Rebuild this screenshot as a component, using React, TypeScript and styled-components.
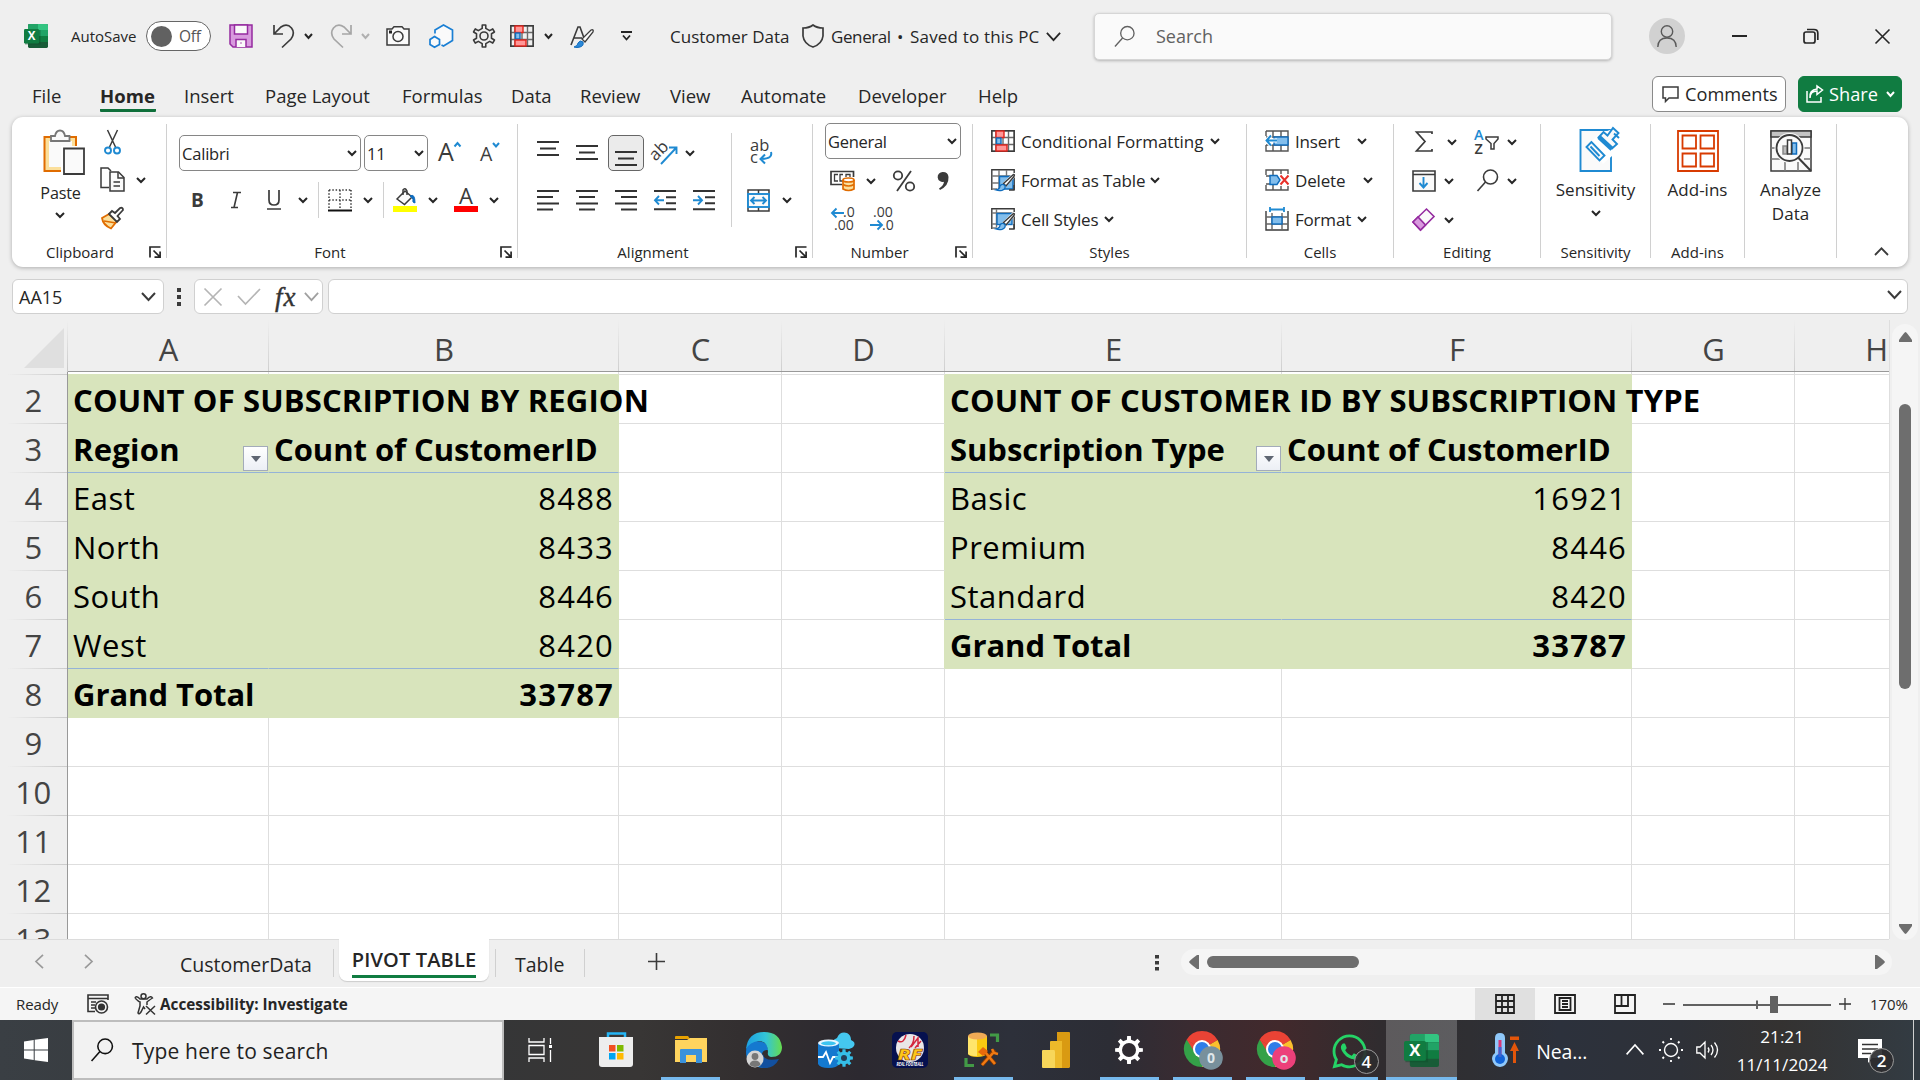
import React from 'react';
import styled, { createGlobalStyle, css } from 'styled-components';
import { FaWhatsapp } from 'react-icons/fa';

const INK = '#3b3b3b';
const BLUE = '#1f8ad2';
const DEEP = '#0f6cbd';
const SKY = '#83beec';
const ORANGE = '#e06c00';
const GREEN = '#107c41';
const FILL = '#d8e4bc';
const LINE = '#dedede';

const Global = createGlobalStyle`
  * { box-sizing: border-box; }
  body { margin: 0; background: #efefef; overflow: hidden; }
  svg { display: block; flex: none; overflow: visible; }
`;

const Window = styled.div`
  width: 1920px;
  height: 1080px;
  display: flex;
  flex-direction: column;
  background: #efefef;
  color: #262626;
  font-family: 'Open Sans', 'Noto Sans', sans-serif;
  font-size: 17px;
  overflow: hidden;
`;

interface SlotProps { $w?: number; $ml?: number; $mt?: number }
const Slot = styled.span<SlotProps>`
  display: inline-flex;
  align-items: center;
  flex: none;
  white-space: nowrap;
  ${p => p.$w && css`width: ${p.$w}px;`}
  margin-left: ${p => p.$ml || 0}px;
  margin-top: ${p => p.$mt || 0}px;
`;
const Text = styled(Slot)<{ $size?: number; $ls?: number; $bold?: number; $color?: string }>`
  font-size: ${p => p.$size || 17}px;
  letter-spacing: ${p => p.$ls || 0}px;
  font-weight: ${p => p.$bold || 400};
  color: ${p => p.$color || '#262626'};
`;

/* ---------- drawing helpers ---------- */
interface IconProps { w: number; h: number; sw?: number; color?: string; children?: React.ReactNode }
const Icon = ({ w, h, sw = 1.5, color = INK, children }: IconProps) => (
  <svg width={w} height={h} viewBox={`0 0 ${w} ${h}`} fill="none" stroke={color} strokeWidth={sw}>{children}</svg>
);
const Chevron = ({ w = 10, h = 6, sw = 2, color = '#262626' }) => (
  <Icon w={w} h={h} sw={sw} color={color}><path d={`M${sw / 2} ${sw / 2}L${w / 2} ${h - sw / 2}L${w - sw / 2} ${sw / 2}`} /></Icon>
);
const Glyph = ({ x, y, s, c = INK, b, children, f = 'Open Sans', r }: any) => (
  <text x={x} y={y} fontSize={s} fontWeight={b || 400} fontFamily={`${f}, sans-serif`} fill={c} stroke="none" transform={r}>{children}</text>
);
const gear = (n: number, c: number, ro: number, ri: number, k = 0.22) => {
  const pts: string[] = [];
  for (let i = 0; i < n; i++) {
    const a = (i / n) * Math.PI * 2 - Math.PI / 2;
    const step = (Math.PI * 2) / n;
    [[ri, -k * 1.5], [ro, -k], [ro, k], [ri, k * 1.5]].forEach(([r, o]) => {
      const t = a + o * step;
      pts.push(`${(c + r * Math.cos(t)).toFixed(2)} ${(c + r * Math.sin(t)).toFixed(2)}`);
    });
  }
  return `M${pts.join('L')}Z`;
};

const ExcelLogo = ({ size, h = size }: { size: number; h?: number }) => (
  <svg width={size} height={h} viewBox="0 0 24 24" preserveAspectRatio="none">
    <rect x="4" y="0" width="20" height="24" rx="1.4" fill="#185c37" />
    <path d="M5.4 0H14V6H4V1.4Q4 0 5.4 0Z" fill="#21a366" />
    <path d="M14 0H22.600Q24 0 24 1.400V6H14Z" fill="#33c481" />
    <rect x="4" y="6" width="10" height="6" fill="#107c41" />
    <rect x="14" y="6" width="10" height="6" fill="#21a366" />
    <rect x="14" y="12" width="10" height="6" fill="#107c41" />
    <rect x="1" y="6" width="15.500" height="14.500" fill="#0b4d29" opacity=".45" />
    <rect x="0" y="5" width="15" height="14.500" rx="1.200" fill="#107c41" />
    <text x="7.500" y="16.300" fontSize="11.500" fontWeight="700" textAnchor="middle" fontFamily="Open Sans, sans-serif" fill="#fff">X</text>
  </svg>
);
const CondIcon = () => (
  <Icon w={24} h={22} sw={1.4}>
    <path d="M.8.8H23.200V21.200H.8ZM.8 7.500H23M.8 14.500H23M5 1V21M17.500 1V21M12 1V21" stroke="#6a6a6a" />
    <path d="M.8.8H23.200V21.200H.8Z" />
    <rect x="5" y="1" width="8" height="6.500" fill="#ff9797" stroke="#e3231b" />
    <rect x="5.500" y="8" width="4.500" height="6" fill={SKY} stroke={DEEP} />
    <rect x="5" y="15" width="11" height="6" fill="#ff9797" stroke="#e3231b" />
  </Icon>
);
const Brush = () => (
  <g>
    <path d="M10 17L22 5L24 5V9L14 20Z" fill="#fff" stroke="none" />
    <path d="M12.500 15.500L22.500 6.500Q24 6.500 23 8.500L15 18Z" fill="#fff" stroke={INK} strokeWidth="1.400" />
    <path d="M5 22Q9 21 9 18Q11 15 14 17.500Q15 21 11 22.300Q8 23 5 22Z" fill={SKY} stroke={DEEP} strokeWidth="1.300" />
  </g>
);
const TableIcon = ({ cell }: { cell?: boolean }) => (
  <Icon w={24} h={24} sw={1.4}>
    <path d="M.8 22V1.800H23.200V22" />
    {cell ? <path d="M5.500 2V20M.8 6H23M1 17H6M1 21H6" stroke="#777" /> : <path d="M8 2V21M15.500 2V9M.8 8H23M.8 15H9M1 21H6" stroke="#777" />}
    {cell ? <rect x="6" y="6.500" width="15" height="11" fill={SKY} stroke={DEEP} /> : <path d="M8.500 8.500H22V21H8.500Z" fill={SKY} stroke={DEEP} />}
    <path d="M18 22H23V17" />
    <Brush />
  </Icon>
);
const lines = (w: number, rows: [number, number, number][]) => (
  <Icon w={w} h={36} sw={1.9} color="#333"><path d={rows.map(([y, a, b]) => `M${a} ${y}H${b}`).join('')} /></Icon>
);
const Launcher = () => (
  <Icon w={12} h={12} sw={1.7} color="#262626"><path d="M1 11.500V1H11.500M4.500 4.500L11 11M11.100 5.500V11.100H5.500" /></Icon>
);
const Magnifier = ({ w = 22, h = 23, color = INK, sw = 1.6 }) => (
  <svg width={w} height={h} viewBox="0 0 22 23" fill="none" stroke={color} strokeWidth={sw}><circle cx="14" cy="8" r="7" /><path d="M9 13L1 22" /></svg>
);

/* ---------- title bar ---------- */
const TitleBar = styled.header`
  height: 72px;
  flex: none;
  display: flex;
  align-items: center;
  padding-left: 24px;
`;
const Toggle = styled.span`
  width: 65px; height: 30px; margin-left: 8px; flex: none;
  border: 1.500px solid #666; border-radius: 15px; background: #fff;
  display: flex; align-items: center; padding-left: 4px; gap: 7px;
  font-size: 15.500px; color: #555; letter-spacing: -0.2px;
  &::before { content: ''; width: 21px; height: 21px; border-radius: 50%; background: #616161; }
`;
const SearchBox = styled.div`
  width: 518px; height: 47px; margin-left: 33px; flex: none;
  display: flex; align-items: center; gap: 21px; padding-left: 19px;
  background: #fafafa; border-radius: 5px; border: 1px solid #d6d6d6;
  box-shadow: 0 1px 3px rgba(0,0,0,.25);
  color: #616161; font-size: 18px;
`;
const Avatar = styled.div`
  width: 36px; height: 36px; border-radius: 50%; margin-left: 37px; background: #d1d1d1; flex: none;
  display: flex; justify-content: center; align-items: center;
`;

/* ---------- tabs ---------- */
const TabBar = styled.nav`
  height: 45px; flex: none; display: flex; padding: 4px 18px 0 32px;
`;
const Tab = styled.span<{ $w: number; $ml: number; $on?: boolean }>`
  flex: none; width: ${p => p.$w}px; margin-left: ${p => p.$ml}px; height: 36px; line-height: 39px;
  font-size: 18.500px; white-space: nowrap; font-weight: ${p => (p.$on ? 700 : 400)};
  border-bottom: 3px solid ${p => (p.$on ? '#0f703b' : 'transparent')};
  ${p => p.$on && css`border-radius: 1px; letter-spacing: 0.100px;`}
`;
const ActionButton = styled.span<{ $primary?: boolean; $w: number }>`
  width: ${p => p.$w}px; height: 36px; flex: none; border-radius: 6px;
  display: flex; align-items: center; padding-left: 7px; gap: 6px; font-size: 18.200px;
  background: ${p => (p.$primary ? GREEN : '#fff')};
  color: ${p => (p.$primary ? '#fff' : '#262626')};
  border: 1px solid ${p => (p.$primary ? GREEN : '#8a8a8a')};
  & > svg:last-child { margin-left: 2px; }
`;
const Actions = styled.div`display: flex; gap: 12px; margin-left: auto;`;
const TABS: [string, number, number][] = [['File', 31, 0], ['Home', 56, 37], ['Insert', 49, 28], ['Page Layout', 107, 32], ['Formulas', 81, 30], ['Data', 42, 28], ['Review', 61, 27], ['View', 42, 29], ['Automate', 89, 29], ['Developer', 90, 28], ['Help', 41, 30]];

/* ---------- ribbon ---------- */
const Ribbon = styled.section`
  margin: 0 12px; height: 150px; flex: none; display: flex;
  background: #fff; border-radius: 11px; box-shadow: 0 1px 4px rgba(0,0,0,.28);
`;
const Group = styled.div<{ $w: number; $last?: boolean }>`
  width: ${p => p.$w}px; flex: none; height: 134px; margin-top: 7px;
  border-right: 1px solid #d0d0d0; display: flex; flex-direction: column; justify-content: space-between;
`;
const GroupBody = styled.div<{ $pt?: number; $gap?: number; $pl?: number }>`
  display: flex; flex-direction: column; gap: ${p => p.$gap || 0}px;
  padding: ${p => p.$pt || 0}px 0 0 ${p => p.$pl || 0}px; height: 116px;
`;
const Row = styled.div<{ $h?: number }>`display: flex; align-items: center; height: ${p => p.$h || 39}px; flex: none;`;
const GroupFoot = styled.div<{ $shift?: number }>`
  height: 18px; margin-bottom: -3px; display: grid; grid-template-columns: 1fr auto 1fr; align-items: center; font-size: 15px; line-height: 18px;
  & > span { grid-column: 2; margin-left: ${p => p.$shift || 0}px; margin-top: -1px; }
  & > svg { justify-self: end; margin-right: 5px; }
`;
const Combo = styled.span<{ $w: number; $ml?: number }>`
  width: ${p => p.$w}px; height: 36px; margin-left: ${p => p.$ml || 0}px; flex: none;
  border: 1px solid #868686; border-radius: 5px; display: flex; align-items: center; justify-content: space-between;
  padding: 0 3px 0 2px; font-size: 16.500px; letter-spacing: -0.200px; background: #fff;
`;
const VRule = styled.i<{ $h: number; $ml: number; $mt?: number }>`
  width: 1px; height: ${p => p.$h}px; margin-left: ${p => p.$ml}px; margin-top: ${p => p.$mt || 0}px; background: #d0d0d0; flex: none;
`;
const Pressed = styled.span`
  width: 36px; height: 36px; margin-left: 10px; flex: none; background: #ebebeb; border: 1px solid #666; border-radius: 5px;
  display: flex; align-items: center; justify-content: center;
`;
const Split = styled.div`display: flex;`;
const Stack = styled.div<{ $w?: number; $gap?: number }>`
  display: flex; flex-direction: column; align-items: center; ${p => p.$w && css`width: ${p.$w}px;`} flex: none; gap: ${p => p.$gap || 0}px;
`;
const BigLabel = styled.span`font-size: 17px; line-height: 24px; text-align: center;`;

const Foot = ({ label, launch, shift }: { label?: string; launch?: boolean; shift?: number }) => (
  <GroupFoot $shift={shift}>{label && <span>{label}</span>}{launch && <Launcher />}</GroupFoot>
);

const ClipboardGroup = () => (
  <Group $w={155}>
    <Split>
      <GroupBody $pt={5} $pl={27}>
        <Stack $w={43}>
          <Slot $ml={6}>
            <Icon w={42} h={46} sw={1.5}>
              <path d="M1.500 8H33V42H1.500Z" fill="#fbdf9b" stroke={ORANGE} strokeWidth="2" />
              <path d="M6 12H29V38H6Z" fill="#fafafa" stroke="none" />
              <path d="M8 12V7H12Q13 1.500 17 1.500T22 7H26.500V12Z" fill="#fafafa" stroke="#777" strokeWidth="1.800" />
              <path d="M18 17H42V46H18Z" fill="#fff" stroke="none" />
              <path d="M21 19.500H41V45H21Z" fill="#fafafa" strokeWidth="1.800" />
            </Icon>
          </Slot>
          <Text $size={16.2} $mt={7} $ls={-0.2}>Paste</Text>
          <Slot $mt={8} $ml={-1}><Chevron /></Slot>
        </Stack>
      </GroupBody>
      <GroupBody $pl={18}>
        <Row $h={36}>
          <Slot $ml={4}><Icon w={17} h={25}><path d="M3.500 0L11.500 17M13.500 0L5.500 17" /><circle cx="4" cy="20.500" r="3" stroke={BLUE} strokeWidth="1.900" /><circle cx="13" cy="20.500" r="3" stroke={BLUE} strokeWidth="1.900" /></Icon></Slot>
        </Row>
        <Row $h={39}>
          <Icon w={25} h={25}><path d="M9 20.500H1V1H8L11 4" /><path d="M10 5H18.500L24 10.500V24H10Z" fill="#fafafa" /><path d="M18 5V11H24M13.500 15H20M13.500 19H20" /></Icon>
          <Slot $ml={11}><Chevron /></Slot>
        </Row>
        <Row $h={38}>
          <Icon w={24} h={23}><path d="M2 11L9 7L17 14L11 21.500Q3 18 2 11Z" fill="#fbdf9b" stroke={ORANGE} strokeWidth="1.800" /><path d="M4 14L16 16" stroke={ORANGE} /><path d="M9 7L12 4L15 6L20 1Q23 0 23 3L17.500 9L20 12L17 15Z" fill="#fff" strokeWidth="1.800" /></Icon>
        </Row>
      </GroupBody>
    </Split>
    <Foot label="Clipboard" launch shift={-18} />
  </Group>
);

const FontGroup = () => (
  <Group $w={351}>
    <GroupBody $pt={11} $gap={11} $pl={12}>
      <Row $h={36}>
        <Combo $w={182}>Calibri<Chevron /></Combo>
        <Combo $w={64} $ml={3}>11<Chevron /></Combo>
        <Slot $ml={10}><Icon w={24} h={26}><Glyph x={0} y={21} s={25}>A</Glyph><path d="M16.500 6.500L19.500 3L22.500 6.500" stroke={BLUE} strokeWidth="2" /></Icon></Slot>
        <Slot $ml={18}><Icon w={22} h={26}><Glyph x={0} y={21} s={19.5}>A</Glyph><path d="M13 3L16 6.500L19 3" stroke={BLUE} strokeWidth="2" /></Icon></Slot>
      </Row>
      <Row $h={36}>
        <Text $ml={12} $mt={-1} $w={14} $size={19} $bold={700} $color={INK}>B</Text>
        <Slot $ml={25}><Icon w={12} h={18} sw={1.600}><path d="M3 1.500H11M1 16.500H8M7.500 1.500L4 16.500" /></Icon></Slot>
        <Slot $ml={25}><Icon w={14} h={20} sw={1.700}><path d="M2 0V10Q2 15 7 15T12 10V0M0 19H14" /></Icon></Slot>
        <Slot $ml={17}><Chevron /></Slot>
        <VRule $h={36} $ml={10} />
        <Slot $ml={9}><Icon w={24} h={23}><path d="M1 1H23M1 1V20M23 1V20M12 1V20M1 11H23" strokeDasharray="1.500 1.800" /><path d="M0 21.500H24" stroke="#111" strokeWidth="2" /></Icon></Slot>
        <Slot $ml={11}><Chevron /></Slot>
        <VRule $h={36} $ml={10} />
        <Slot $ml={9}><Icon w={24} h={24}><path d="M4 11L12 3L19 9L11.500 16.500Z" fill="#fafafa" /><path d="M10 7V2Q12 -1 14 3V7" /><path d="M17 8Q22 5 22 15Q19 15 20 11Z" fill={DEEP} stroke={DEEP} strokeWidth="1" /><path d="M0 21H24" stroke="#ff0" strokeWidth="6" /></Icon></Slot>
        <Slot $ml={11}><Chevron /></Slot>
        <Slot $ml={16}><Icon w={24} h={24}><Glyph x={5} y={16} s={22}>A</Glyph><path d="M0 21H24" stroke="#f00" strokeWidth="6" /></Icon></Slot>
        <Slot $ml={11}><Chevron /></Slot>
      </Row>
    </GroupBody>
    <Foot label="Font" launch shift={-24} />
  </Group>
);

const AlignmentGroup = () => (
  <Group $w={295}>
    <Split>
      <GroupBody $pt={11} $gap={11} $pl={19}>
        <Row $h={36}>
          {lines(22, [[7, 0, 22], [13.5, 3, 19], [20, 0, 22]])}
          <Slot $ml={17}>{lines(22, [[11, 0, 22], [17.5, 3, 19], [24, 0, 22]])}</Slot>
          <Pressed>{lines(22, [[17, 0, 22], [23.5, 3, 19], [30, 0, 22]])}</Pressed>
          <Slot $ml={9}><Icon w={25} h={26}><Glyph x={-2} y={17} s={17} r="rotate(-45 6 14)">ab</Glyph><path d="M8 24L23 8M16 7.500H23.500V14" stroke={BLUE} strokeWidth="1.900" /></Icon></Slot>
          <Slot $ml={7}><Chevron /></Slot>
        </Row>
        <Row $h={36}>
          {lines(22, [[9, 0, 22], [15, 0, 16], [21.5, 0, 22], [27.5, 0, 16]])}
          <Slot $ml={17}>{lines(22, [[9, 0, 22], [15, 3, 19], [21.5, 0, 22], [27.5, 3, 19]])}</Slot>
          <Slot $ml={17}>{lines(22, [[9, 0, 22], [15, 6, 22], [21.5, 0, 22], [27.5, 6, 22]])}</Slot>
          <Slot $ml={17}><Icon w={22} h={20} sw={1.9} color="#333"><path d="M0 1H22M12 7.300H22M12 13.300H22M0 19.200H22" /><path d="M10 10.300H1M5 6L1 10.300L5 14.500" stroke={BLUE} /></Icon></Slot>
          <Slot $ml={17}><Icon w={22} h={20} sw={1.9} color="#333"><path d="M0 1H22M12 7.300H22M12 13.300H22M0 19.200H22" /><path d="M0 10.300H9M5 6L9 10.300L5 14.500" stroke={BLUE} /></Icon></Slot>
        </Row>
      </GroupBody>
      <VRule $h={94} $ml={16} $mt={9} />
      <GroupBody $pt={11} $gap={11} $pl={15}>
        <Row $h={36}><Slot $ml={4}><Icon w={22} h={26}><Glyph x={-1} y={11} s={16.5}>ab</Glyph><Glyph x={-1} y={23} s={16.5}>c</Glyph><path d="M20 12Q22 19 10 19M14 14.500L9.500 19L14 23.500" stroke={BLUE} strokeWidth="2" /></Icon></Slot></Row>
        <Row $h={36}>
          <Icon w={23} h={23} sw={1.500}><path d="M1 1H22V22H1ZM11.500 1V5M11.500 18V22" /><rect x="1" y="5" width="21" height="13" fill="#fafafa" stroke={BLUE} strokeWidth="1.900" /><path d="M4 11.500H19M7.500 8L4 11.500L7.500 15M15.500 8L19 11.500L15.500 15" stroke={BLUE} strokeWidth="1.900" /></Icon>
          <Slot $ml={12}><Chevron /></Slot>
        </Row>
      </GroupBody>
    </Split>
    <Foot label="Alignment" launch shift={-24} />
  </Group>
);

const NumberGroup = () => (
  <Group $w={160}>
    <GroupBody $pl={12}>
      <Row $h={34}><Combo $w={136}><Text $size={16.5} $ls={-0.3}>General</Text><Chevron /></Combo></Row>
      <Row $h={45}>
        <Slot $ml={5}><Icon w={25} h={21} sw={1.700}><path d="M12 14.500H1V1.500H23.500V7" /><path d="M8 4.500H4.500V11H8M13 11H10V4.500H13M16 7V4.500H20V7" strokeWidth="1.300" /><path d="M13 10V19Q18.500 22 24 19V10" fill="#fbdf9b" stroke={ORANGE} /><ellipse cx="18.500" cy="10" rx="5.500" ry="2" fill="#fff" stroke={ORANGE} /><path d="M13 14.500Q18.500 17.500 24 14.500" stroke={ORANGE} /></Icon></Slot>
        <Slot $ml={11}><Chevron /></Slot>
        <Slot $ml={16}><Icon w={24} h={24} sw={1.800}><circle cx="6" cy="6.500" r="4.200" /><circle cx="18" cy="17.500" r="4.200" /><path d="M19 2L5 22" /></Icon></Slot>
        <Slot $ml={21}><Icon w={13} h={20}><path d="M6 1A5 5 0 1 0 7 10.800Q6.500 15 2 17.500L3 19Q12 14.500 11.500 6Q11 1 6 1Z" fill={INK} stroke="none" /></Icon></Slot>
      </Row>
      <Row $h={32}>
        <Slot $ml={6}><Icon w={25} h={26}><Glyph x={12} y={11} s={14}>.0</Glyph><Glyph x={3} y={24} s={14}>.00</Glyph><path d="M13 7H1M5.500 2.500L1 7L5.500 11.500" stroke={BLUE} strokeWidth="1.900" /></Icon></Slot>
        <Slot $ml={14}><Icon w={25} h={26}><Glyph x={3} y={11} s={14}>.00</Glyph><Glyph x={12} y={24} s={14}>.0</Glyph><path d="M0 19H12M7.500 14.500L12 19L7.500 23.500" stroke={BLUE} strokeWidth="1.900" /></Icon></Slot>
      </Row>
    </GroupBody>
    <Foot label="Number" launch shift={-26} />
  </Group>
);

const StylesGroup = () => (
  <Group $w={274}>
    <GroupBody $pl={18}>
      <Row $h={34}><CondIcon /><Text $ml={6}>Conditional Formatting</Text><Slot $ml={7}><Chevron /></Slot></Row>
      <Row $h={44}><TableIcon /><Text $ml={6} $ls={-0.15}>Format as Table</Text><Slot $ml={5}><Chevron /></Slot></Row>
      <Row $h={34}><TableIcon cell /><Text $ml={6} $ls={-0.15}>Cell Styles</Text><Slot $ml={6}><Chevron /></Slot></Row>
    </GroupBody>
    <Foot label="Styles" />
  </Group>
);

const CellsGroup = () => (
  <Group $w={147}>
    <GroupBody $pl={18}>
      <Row $h={34}>
        <Icon w={24} h={22} sw={1.4}><path d="M1 1H23V21H1V15M1 1V6M8 1V7M16 1V21M8 15V21M1 15H23M1 7H23" stroke="#555" /><rect x="9" y="7" width="14" height="8" fill={SKY} stroke={DEEP} /><path d="M12 10.500H1.500M6 5.500L1.500 10.500L6 15.500" stroke="#fff" strokeWidth="4" /><path d="M12 10.500H1.500M6 5.500L1.500 10.500L6 15.500" stroke={BLUE} strokeWidth="1.900" /></Icon>
        <Text $ml={6} $w={60} $ls={-0.15}>Insert</Text><Slot $ml={2}><Chevron /></Slot>
      </Row>
      <Row $h={44}>
        <Icon w={24} h={22} sw={1.4}><path d="M1 6V1H23V5M1 16V21H23V17M1 7H5M1 15H5M8 1V6M16 1V5M8 16V21M16 17V21" stroke="#555" /><path d="M5 6.500H12L15 11L12 15.500H5Z" fill={SKY} stroke={DEEP} /><path d="M15.500 6.500L23.500 15.500M23.500 6.500L15.500 15.500" stroke="#e8312b" strokeWidth="2" /></Icon>
        <Text $ml={6} $w={60} $ls={-0.15}>Delete</Text><Slot $ml={8}><Chevron /></Slot>
      </Row>
      <Row $h={34}>
        <Icon w={24} h={24} sw={1.4}><path d="M5 0V5M19 0V5M5 2.500H19" stroke={BLUE} strokeWidth="1.800" /><path d="M1 4V23H23V4" /><path d="M1 10H23M1 17H23M7 6V23M17 6V23" stroke="#666" /><rect x="7" y="10" width="10" height="7" fill={SKY} stroke={DEEP} /></Icon>
        <Text $ml={6} $w={60} $ls={-0.2}>Format</Text><Slot $ml={2}><Chevron /></Slot>
      </Row>
    </GroupBody>
    <Foot label="Cells" />
  </Group>
);

const EditingGroup = () => (
  <Group $w={147}>
    <GroupBody $pl={18}>
      <Row $h={35}>
        <Slot $ml={3}><Icon w={18} h={21} sw={1.700}><path d="M17 3V1H1.500L10 10.500L1.500 20H17V18" /></Icon></Slot>
        <Slot $ml={14}><Chevron /></Slot>
        <Slot $ml={17}><Icon w={25} h={26}><Glyph x={0} y={11} s={14.5} c={BLUE} b={600}>A</Glyph><Glyph x={0.5} y={25} s={14.5} b={600}>Z</Glyph><path d="M12 8H24V10L20 14.500V20H17V14.500L12 10Z" /></Icon></Slot>
        <Slot $ml={8}><Chevron /></Slot>
      </Row>
      <Row $h={43}>
        <Icon w={24} h={22} sw={1.600}><path d="M1 1H23V21H1ZM1 4.500H23" fill="#fafafa" /><path d="M11.500 7V17M7.500 13L11.500 17.500L15.500 13" stroke={BLUE} strokeWidth="1.900" /></Icon>
        <Slot $ml={8}><Chevron /></Slot>
        <Slot $ml={22}><Magnifier w={23} h={23} /></Slot>
        <Slot $ml={8}><Chevron /></Slot>
      </Row>
      <Row $h={35}>
        <Icon w={23} h={23} sw={1.600} color="#952ba0"><path d="M1 14L14.500 1L22 8.500L8.500 22Z" fill="#fafafa" /><path d="M1 14L6 9L13.500 17L8.500 22Z" fill="#d89ade" /></Icon>
        <Slot $ml={9}><Chevron /></Slot>
      </Row>
    </GroupBody>
    <Foot label="Editing" />
  </Group>
);

const SensitivityGroup = () => (
  <Group $w={110}>
    <GroupBody $pt={2}>
      <Stack>
        <Slot $ml={8}>
          <Icon w={42} h={46} color={BLUE} sw={1.900}>
            <path d="M1.500 4H32V45H1.500Z" fill="#fafafa" />
            <path d="M10 18L20 8L42 0V22L24 38Z" fill="#fff" stroke="none" />
            <path d="M12.500 16L7.500 21L20.500 34.500L25.500 29.500Z" fill="#fafafa" /><path d="M11.500 20.500L20.500 30" />
            <path d="M19.500 11.500L24.500 6L28.500 9.500L34 2L39.500 7L33.500 13.500L38 18L33 22.500Z" fill="#fafafa" /><path d="M20 11L33 23" strokeWidth="4.500" />
            <path d="M35 7.500L40 12" />
          </Icon>
        </Slot>
        <Slot $mt={6}><BigLabel>Sensitivity</BigLabel></Slot>
        <Slot $mt={8}><Chevron /></Slot>
      </Stack>
    </GroupBody>
    <Foot label="Sensitivity" />
  </Group>
);
const AddinsGroup = () => (
  <Group $w={94}>
    <GroupBody $pt={6}>
      <Stack>
        <Icon w={42} h={42} color="#d83b01" sw={1.800}><path d="M1 1H41V41H1ZM5.500 5.500H19V18.500H5.500ZM23.500 5.500H37V18.500H23.500ZM5.500 23.500H19V36.500H5.500ZM23.500 23.500H37V36.500H23.500Z" /></Icon>
        <Slot $mt={6}><BigLabel>Add-ins</BigLabel></Slot>
      </Stack>
    </GroupBody>
    <Foot label="Add-ins" />
  </Group>
);
const AnalyzeGroup = () => (
  <Group $w={92}>
    <GroupBody $pt={6}>
      <Stack>
        <Icon w={42} h={42} sw={1.500}>
          <path d="M1 1H41V41H1Z" fill="#fafafa" /><path d="M1 1H41V7H1Z" fill="#c3c3c3" />
          <path d="M1 18H7M34 18H41M1 29H10M34 29H41M15 32V41M28 32V41" stroke="#777" />
          <circle cx="19.500" cy="18" r="15" fill="#fafafa" stroke="none" />
          <circle cx="19.500" cy="18" r="13" fill="#fafafa" strokeWidth="1.800" /><path d="M28.500 28L41 41" strokeWidth="2" />
          <path d="M13 16H17V24H13Z" fill="#bbb" stroke="#888" /><path d="M22 13H26.500V24H22Z" fill={SKY} stroke={DEEP} /><path d="M17.500 10H21.500V24H17.500Z" fill="#fff" />
        </Icon>
        <Slot $mt={6}><BigLabel>Analyze<br />Data</BigLabel></Slot>
      </Stack>
    </GroupBody>
  </Group>
);
const Collapse = styled.div`margin: auto 19px 11px auto;`;

/* ---------- formula bar ---------- */
const FormulaBar = styled.div`height: 53px; flex: none; display: flex; padding: 12px 12px 0 12px;`;
const Field = styled.div<{ $w?: number; $ml?: number }>`
  ${p => (p.$w ? css`width: ${p.$w}px; flex: none;` : css`flex: 1;`)}
  height: 35px; margin-left: ${p => p.$ml || 0}px; background: #fff; border: 1px solid #d0d0d0; border-radius: 6px;
  display: flex; align-items: center;
`;
const Fx = styled.span`font: italic 400 27px 'Liberation Serif', serif; -webkit-text-stroke: 0.4px #333; width: 24px; margin-left: 14px; color: #333; letter-spacing: 1px; line-height: 28px;`;
const Push = styled.span`margin-left: auto;`;

/* ---------- sheet ---------- */
const COLS: [string, number][] = [['A', 201], ['B', 350], ['C', 163], ['D', 163], ['E', 337], ['F', 350], ['G', 163], ['H', 95]];
const Body = styled.main`display: flex; height: 619px; flex: none;`;
const Sheet = styled.div`width: 1890px; flex: none; display: flex; flex-direction: column; overflow: hidden; border-right: 1px solid ${LINE};`;
const HeadRow = styled.div`display: flex; height: 52px; flex: none;`;
const Corner = styled.div`
  width: 68px; flex: none; display: flex; justify-content: flex-end; padding: 8px 4px 0 0;
  background: linear-gradient(#efefef, #c8c8c8) right / 1px 100% no-repeat;
`;
const ColHead = styled.div<{ $w: number }>`
  width: ${p => p.$w}px; flex: none; border-bottom: 1px solid #999; text-align: center; font-size: 31px; line-height: 58px; color: #444;
  background: linear-gradient(#efefef, #cfcfcf) right / 1px 100% no-repeat;
  &:last-child { text-align: right; padding-right: 2px; background: none; }
`;
const SheetRow = styled.div<{ $h?: number }>`display: flex; height: ${p => p.$h || 49}px; flex: none;`;
const RowHead = styled.div`
  width: 68px; flex: none; border-right: 1px solid #999; text-align: center; font-size: 31px; line-height: 51px; color: #444; letter-spacing: 0.500px;
  background: linear-gradient(90deg, #efefef 10%, #cbcbcb) bottom / 100% 1px no-repeat;
`;
const Cell = styled.div<{ $w: number; $fill?: boolean; $bold?: boolean; $num?: boolean; $right: string; $bottom: string; $ls?: number }>`
  width: ${p => p.$w}px; flex: none; display: flex; align-items: center; white-space: nowrap;
  justify-content: ${p => (p.$num ? 'flex-end' : 'flex-start')};
  padding: 1px ${p => (p.$num ? 4 : 5)}px 0 5px; background: ${p => (p.$fill ? FILL : '#fff')};
  border-right: 1px solid ${p => p.$right}; border-bottom: 1px solid ${p => p.$bottom};
  font-size: 31px; line-height: 40px; color: #000; font-weight: ${p => (p.$bold ? 700 : 400)};
  letter-spacing: ${p => p.$ls || 0}px;
  &:not(:empty) { z-index: 1; }
`;
const FilterButton = styled.span`
  width: 25px; height: 25px; margin: 20px -5px 0 auto; border: 1px solid #a3abba; background: linear-gradient(#fff, #eceff5);
  display: flex; align-items: center; justify-content: center;
`;
const DATA: Record<number, string[]> = {
  2: ['COUNT OF SUBSCRIPTION BY REGION', '', '', '', 'COUNT OF CUSTOMER ID BY SUBSCRIPTION TYPE', ''],
  3: ['Region', 'Count of CustomerID', '', '', 'Subscription Type', 'Count of CustomerID'],
  4: ['East', '8488', '', '', 'Basic', '16921'],
  5: ['North', '8433', '', '', 'Premium', '8446'],
  6: ['South', '8446', '', '', 'Standard', '8420'],
  7: ['West', '8420', '', '', 'Grand Total', '33787'],
  8: ['Grand Total', '33787'],
};
const filled = (r: number, c: number) => (c < 2 && c >= 0 && r >= 2 && r <= 8) || ((c === 4 || c === 5) && r >= 2 && r <= 7);
const ruled = (r: number, c: number) => (c < 2 && (r === 3 || r === 7)) || ((c === 4 || c === 5) && (r === 3 || r === 6));
const boldAt = (r: number, c: number) => r < 4 || (c < 2 ? r === 8 : r === 7);
const spacing = (t: string, r: number) => {
  if (/^\d+$/.test(t)) return 1.2;
  if (r === 2) return 0.13;
  if (t === 'Region') return 0.25;
  return /^(Count|Subs|Grand)/.test(t) ? -0.05 : 0.5;
};

const GridRow = ({ r }: { r: number }) => (
  <SheetRow $h={r === 1 ? 3 : 49}>
    <RowHead>{r === 1 ? '' : r}</RowHead>
    {COLS.map(([name, w], c) => {
      const t = DATA[r]?.[c] || '';
      const green = filled(r, c);
      return (
        <Cell key={name} $w={w} $fill={green} $bold={boldAt(r, c)} $num={/^\d+$/.test(t)} $ls={spacing(t, r)}
          $right={green || filled(r, c + 1) ? FILL : LINE}
          $bottom={ruled(r, c) ? '#95b3d7' : green || filled(r + 1, c) ? FILL : LINE}>
          {t}
          {r === 3 && (c === 0 || c === 4) && <FilterButton><svg width="10" height="6"><path d="M0 0H10L5 6Z" fill="#5f6672" /></svg></FilterButton>}
        </Cell>
      );
    })}
  </SheetRow>
);

const VScroll = styled.div`
  width: 26px; height: 616px; margin: 4px 0 0 2px; border-radius: 13px; background: #f5f5f5;
  display: flex; flex-direction: column; align-items: center; padding-top: 8px; flex: none;
`;
const VThumb = styled.div`width: 12px; height: 285px; border-radius: 6px; background: #6e6e6e; margin: 62px 0 235px;`;

/* ---------- sheet tabs ---------- */
const SheetTabs = styled.div`height: 48px; flex: none; display: flex; background: linear-gradient(#dcdcdc, #dcdcdc) top left / 1889px 1px no-repeat; padding-left: 35px;`;
const SheetTab = styled.span<{ $w: number; $ml: number }>`width: ${p => p.$w}px; margin-left: ${p => p.$ml}px; flex: none; font-size: 19.500px; line-height: 51px; white-space: nowrap;`;
const ActiveTab = styled.span`
  width: 150px; height: 42px; margin-left: 5px; flex: none; background: #fff; border-radius: 0 0 8px 8px; box-shadow: 0 1px 1px #ccc;
  display: flex; justify-content: center;
`;
const ActiveTabText = styled.b`font-weight: 600; font-size: 20px; height: 39px; line-height: 41px; border-bottom: 3px solid ${GREEN}; white-space: nowrap; letter-spacing: 0.160px;`;
const HScroll = styled.div`
  width: 711px; height: 26px; margin: 10px 0 0 22px; border-radius: 13px; background: #f5f5f5; flex: none;
  display: flex; align-items: center; padding: 0 7px 0 8px;
`;
const HThumb = styled.div`width: 152px; height: 12px; border-radius: 6px; background: #6e6e6e; margin-left: 8px;`;

/* ---------- status bar ---------- */
const StatusBar = styled.div`height: 33px; flex: none; display: flex; align-items: center; background: #f5f5f5; border-top: 1px solid #fff; padding-left: 16px;`;
const ViewButton = styled.span<{ $on?: boolean }>`
  width: 60px; height: 32px; flex: none; display: flex; align-items: center; justify-content: center;
  background: ${p => (p.$on ? '#e0e0e0' : 'transparent')};
`;

/* ---------- taskbar ---------- */
const Taskbar = styled.footer`
  height: 60px; flex: none; display: flex; color: #fff;
  background: linear-gradient(90deg, #3a3f44 0, #343638 420px, #383635 640px, #332f30 740px, #2c2930 860px, #2d303a 1010px, #2c2d35 1110px, #3a2b31 1190px, #42292c 1280px, #302c2f 1380px, #2f2f33 1470px, #2c313c 1560px, #2e3138 1680px, #343231 1780px, #333b42 1912px);
`;
const StartButton = styled.div`width: 72px; flex: none; display: flex; align-items: center; justify-content: center;`;
const TaskSearch = styled.div`
  width: 432px; height: 60px; flex: none; border: 2px solid #bdbdbd; background: #f2f2f2; display: flex; align-items: center; gap: 18px; padding: 2px 0 0 16px;
  color: #222; font-size: 21px; letter-spacing: 0.180px; white-space: nowrap;
  & > svg { margin-top: -2px; }
`;
const TaskItem = styled.div<{ $open?: boolean; $on?: boolean; $w?: number; $pr?: number }>`
  width: ${p => p.$w || 73.1}px; flex: none; display: flex; align-items: center; justify-content: center; padding-right: ${p => p.$pr || 0}px;
  background:
    ${p => (p.$open || p.$on ? `linear-gradient(#76b9ed, #76b9ed) bottom center / ${p.$on ? 71 : 59}px 3px no-repeat` : 'none')}
    ${p => (p.$on ? ', linear-gradient(rgba(255,255,255,.22), rgba(255,255,255,.22)) center / 71px 100% no-repeat' : '')};
`;
const Clock = styled.div`
  width: 96px; margin-left: 14px; flex: none; display: flex; flex-direction: column; align-items: center; font-size: 17.100px; line-height: 28px; padding-top: 3px;
`;
const sector = (a: number, b: number) => {
  const p = (d: number) => `${(18 + 18 * Math.cos((d * Math.PI) / 180)).toFixed(1)} ${(18 + 18 * Math.sin((d * Math.PI) / 180)).toFixed(1)}`;
  return `M18 18L${p(a)}A18 18 0 0 1 ${p(b)}Z`;
};
const Chrome = ({ tint, letter }: { tint: string; letter: string }) => (
  <svg width="40" height="40" viewBox="0 0 40 40">
    <path d={sector(90, 210)} fill="#34a148" /><path d={sector(210, 330)} fill="#ea4335" /><path d={sector(330, 450)} fill="#fbc02d" />
    <path d="M3 9L11 22L18 18ZM33 9H18V18Z" fill="#ea4335" /><path d="M11 22L18 36L27 22Z" fill="#34a148" />
    <circle cx="18" cy="18" r="9" fill="#fff" /><circle cx="18" cy="18" r="7" fill="#2f7de9" />
    <circle cx="27" cy="27" r="11.800" fill={tint} />
    <text x="27" y="32" fontSize="14" fontWeight="700" textAnchor="middle" fontFamily="Open Sans, sans-serif" fill="#dfe6ea">{letter}</text>
  </svg>
);
const WhatsWrap = styled.span`
  display: grid; width: 49px; height: 42px; margin: 5px 0 0 12px;
  & > * { grid-area: 1 / 1; }
`;
const Badge = styled.span`
  width: 25px; height: 25px; border-radius: 50%; border: 1px solid #9a9a9a; background: rgba(45,45,47,.92);
  align-self: end; justify-self: end; display: flex; align-items: center; justify-content: center; font-size: 17px; font-weight: 600; color: #fff;
`;
const NoteWrap = styled.span`
  display: grid; width: 36px; height: 37px; margin: 16px 0 0 28px; flex: none;
  & > * { grid-area: 1 / 1; }
`;

const TaskIcons = () => (
  <>
    <TaskItem $w={77} $pr={5}>
      <Icon w={24} h={24} color="#fff" sw={1.300}><path d="M1 0V4H16V0M1 24V20H16V24M1 7.500H16V16.500H1ZM22.500 0V6M22.500 12V24" /><path d="M21 7H24V10H21Z" fill="#fff" stroke="none" /></Icon>
    </TaskItem>
    <TaskItem $pr={3}>
      <svg width="36" height="36" viewBox="0 0 36 36"><path d="M10 6V1.500H27V6" fill="none" stroke="#24b5f5" strokeWidth="2.500" /><path d="M1 5H35V32Q35 35 32 35H4Q1 35 1 32Z" fill="#ededed" /><path d="M11 13H17.500V19.500H11Z" fill="#f25022" /><path d="M19 13H25.500V19.500H19Z" fill="#7fba00" /><path d="M11 21H17.500V27.500H11Z" fill="#00a4ef" /><path d="M19 21H25.500V27.500H19Z" fill="#ffb900" /></svg>
    </TaskItem>
    <TaskItem $open>
      <svg width="32" height="28" viewBox="0 0 32 28"><path d="M0 1Q0 0 1 0H13L15 3H0Z" fill="#e8a200" /><path d="M0 4H12L15 2H32V26H0Z" fill="#ffd45e" /><path d="M5 14Q5 13 6 13H26Q27 13 27 14V27H21V19H11V27H5Z" fill="#3a92dc" /></svg>
    </TaskItem>
    <TaskItem>
      <svg width="36" height="36" viewBox="0 0 36 36">
        <defs><linearGradient id="eg" x1="0" x2="1"><stop offset="0" stopColor="#1c9fe0" /><stop offset=".55" stopColor="#33c5d8" /><stop offset="1" stopColor="#66dc4e" /></linearGradient></defs>
        <path d="M0 20Q0 9 10 9Q22 9 22 18Q16 17 16 24Q18 33 31 29Q26 36 17 36Q0 34 0 20Z" fill="#1579cf" />
        <path d="M17 22Q18 30 33 27Q28 37 17 36Q8 33 17 22Z" fill="#12509f" />
        <path d="M0 17Q2 0 18 0Q34 0 36 15Q36 25 25 25Q21 24 22 20Q22 9 12 9Q4 10 0 17Z" fill="url(#eg)" />
        <circle cx="9" cy="27" r="8.500" fill="#d5d5d5" /><circle cx="9" cy="24.500" r="3.400" fill="#777" /><path d="M3.500 33Q4 28.500 9 28.500T14.500 33Q9 37 3.500 33Z" fill="#777" />
      </svg>
    </TaskItem>
    <TaskItem>
      <svg width="37" height="36" viewBox="0 0 37 36"><path d="M16 16Q12 8 19 6Q22 -1 29 1Q33 3 33 8Q38 10 36 14Q35 16 31 17Z" fill="#45c8f0" /><path d="M0 11V32Q2 36 10.500 36T21 32V11Z" fill="#1479cf" /><ellipse cx="10.500" cy="11" rx="10.500" ry="3.500" fill="#e8f6ff" /><ellipse cx="10.500" cy="11.300" rx="7.500" ry="2" fill="#3cc4f0" /><path d="M0 25H5L8 20L12 31L15 25H20" fill="none" stroke="#fff" strokeWidth="1.800" /><path d={gear(8, 26, 9, 6.500)} fill="#35bfe8" /><circle cx="26" cy="26" r="3" fill="#23405a" /></svg>
    </TaskItem>
    <TaskItem>
      <svg width="36" height="36" viewBox="0 0 36 36"><rect width="36" height="36" rx="5" fill="#06114f" /><circle cx="18" cy="16" r="14" fill="#e9e6e8" /><path d="M6 9Q12 12 14 3M17 16Q22 12 22 4M19 15L26 6V15M23 16L29 9" fill="none" stroke="#d4263d" strokeWidth="1.500" />
        <text x="18" y="27.500" fontSize="15" fontWeight="800" fontStyle="italic" textAnchor="middle" textLength="25" lengthAdjust="spacingAndGlyphs" fontFamily="Open Sans, sans-serif" fill="#ffc61a" stroke="#7a2a00" strokeWidth=".5">RF</text>
        <text x="18" y="33.500" fontSize="5.500" fontWeight="700" fontStyle="italic" textAnchor="middle" textLength="27" lengthAdjust="spacingAndGlyphs" fontFamily="Open Sans, sans-serif" fill="#fff">REAL FOOTBALL</text></svg>
    </TaskItem>
    <TaskItem $open>
      <svg width="36" height="36" viewBox="0 0 36 36"><path d="M3 4V22Q5 25 12 25T22 22V4Z" fill="#fbc910" /><path d="M3 4V22Q5 24 12 24V4Z" fill="#ffe56a" /><ellipse cx="12.500" cy="4" rx="9.500" ry="3.500" fill="#f0aa55" /><path d="M25 3H32.500V10M1 26V33.500H9" fill="none" stroke="#429a46" strokeWidth="3.200" /><path d="M17 33L30 18M18 18L30 32" stroke="#8b3a00" strokeWidth="4" /><path d="M17 33L28 21M20 20L30 32" stroke="#f17a12" strokeWidth="2.500" /><path d="M13 20L18 15L23 19L18 24Z" fill="#e96a0c" /><path d="M27 17L29 21L33 22" fill="none" stroke="#f17a12" strokeWidth="2.500" /></svg>
    </TaskItem>
    <TaskItem>
      <svg width="28" height="36" viewBox="0 0 28 36"><path d="M15 0H27Q28 0 28 1V35L27 36H15Z" fill="#d99a12" /><path d="M8 10Q8 9 9 9H20V36H8Z" fill="#edb92a" /><path d="M0 19Q0 18 1 18H12Q13 18 13 20V36H1Q0 36 0 35Z" fill="#f7d65a" /></svg>
    </TaskItem>
    <TaskItem $open>
      <svg width="28" height="28" viewBox="0 0 28 28"><path d={gear(8, 14, 14, 10.500, 0.17)} fill="#fff" /><circle cx="14" cy="14" r="7" fill="#2f2b31" /></svg>
    </TaskItem>
    <TaskItem $open><Slot $ml={3} $mt={2}><Chrome tint="#78909c" letter="0" /></Slot></TaskItem>
    <TaskItem $open><Slot $ml={3} $mt={2}><Chrome tint="#ec407a" letter="o" /></Slot></TaskItem>
    <TaskItem $open><WhatsWrap><FaWhatsapp size={39} color="#25d366" /><Badge>4</Badge></WhatsWrap></TaskItem>
    <TaskItem $on><ExcelLogo size={35} h={33} /></TaskItem>
  </>
);

export default function App() {
  return (
    <Window>
      <Global />
      <TitleBar>
        <ExcelLogo size={24} />
        <Text $ml={23} $w={67} $size={15}>AutoSave</Text>
        <Toggle>Off</Toggle>
        <Slot $ml={18}><Icon w={24} h={24} color="#952ba0"><path d="M1 1H23V23H4L1 20Z" fill="#d89ade" /><path d="M5.500 1H18.500V10H5.500ZM7 23V15.500H17V23" fill="#fafafa" /><path d="M11.500 19H12.500" /></Icon></Slot>
        <Slot $ml={20}><Icon w={22} h={24} sw={1.700}><path d="M1 1V10H10M1.500 9.500L8 3Q14 -1 18.500 4Q22.500 9 18 15L9 23.500" /></Icon></Slot>
        <Slot $ml={9}><Chevron w={9} /></Slot>
        <Slot $ml={17}><Icon w={22} h={24} sw={1.700} color="#a6a6a6"><path d="M21 1V10H12M20.500 9.500L14 3Q8 -1 3.500 4Q-.5 9 4 15L13 23.500" /></Icon></Slot>
        <Slot $ml={9}><Chevron w={9} color="#b0b0b0" /></Slot>
        <Slot $ml={16}><Icon w={24} h={20}><path d="M1 3H6L8 .8H16L18 3H23V19H1Z" fill="#fafafa" /><circle cx="12" cy="10.500" r="5" /><path d="M3 6H6" stroke="#222" strokeWidth="3" /></Icon></Slot>
        <Slot $ml={19}><Icon w={24} h={24} color="#1a7fd4" sw={1.700}><path d="M6 9.500V6L14.500 1L23.500 6V16.500L14.500 22L12.500 21" fill="#fafafa" /><path d="M5.500 12.500L10.500 15.500V20.500L5.500 23.300L1 20.500V15.500Z" fill="#fafafa" /></Icon></Slot>
        <Slot $ml={19}><Icon w={24} h={24} sw={1.600}><path d={gear(6, 12, 11.2, 7.8, 0.15)} strokeLinejoin="round" /><circle cx="12" cy="12" r="4" /></Icon></Slot>
        <Slot $ml={14}><CondIcon /></Slot>
        <Slot $ml={10}><Chevron w={9} /></Slot>
        <Slot $ml={17}><Icon w={24} h={24} sw={1.600}><path d="M1 21L8 3H10L14 14M4 14H12" /><path d="M12 15L21 6Q24 5 23 8L15 18Z" fill="#fafafa" strokeWidth="1.300" /><path d="M4 23Q8 22 8 19Q10 15.500 13 18Q14 22 10 23Q7 24 4 23Z" fill="#2b88d8" stroke={DEEP} strokeWidth="1" /></Icon></Slot>
        <Slot $ml={27}><Icon w={11} h={10} sw={1.800} color="#262626"><path d="M0 1H11M2 4.500L5.500 8.500L9 4.500" /></Icon></Slot>
        <Text $ml={38} $w={120}>Customer Data</Text>
        <Slot $ml={12}><Icon w={22} h={24} sw={1.700}><path d="M11 1Q15 4 21 4V12Q20 20 11 23Q2 20 1 12V4Q7 4 11 1Z" /></Icon></Slot>
        <Text $ml={7} $w={59} $ls={-0.4}>General</Text>
        <Text $ml={7} $w={13}>•</Text>
        <Text $w={129} $ls={0.18}>Saved to this PC</Text>
        <Slot $ml={7}><Chevron w={15} h={9} sw={1.8} /></Slot>
        <SearchBox><Magnifier w={21} h={23} color="#616161" sw={1.4} />Search</SearchBox>
        <Avatar><Icon w={20} h={22} sw={1.4} color="#5a5a5a"><circle cx="10" cy="6.500" r="5.700" /><path d="M.8 22Q1 13 10 13T19.200 22" /></Icon></Avatar>
        <Slot $ml={47} $mt={-1}><Icon w={15} h={2} sw={2} color="#262626"><path d="M0 1H15" /></Icon></Slot>
        <Slot $ml={56}><Icon w={16} h={16} sw={1.700} color="#262626"><rect x="1" y="4" width="11" height="11" rx="2" /><path d="M4 1.500H11Q14.800 1.500 14.800 5V12" /></Icon></Slot>
        <Slot $ml={56}><Icon w={15} h={15} sw={1.600} color="#262626"><path d="M.5.5L14.500 14.500M14.500.5L.5 14.500" /></Icon></Slot>
      </TitleBar>

      <TabBar>
        {TABS.map(([t, w, ml]) => <Tab key={t} $w={w} $ml={ml} $on={t === 'Home'}>{t}</Tab>)}
        <Actions>
          <ActionButton $w={134}><Icon w={17} h={17} sw={1.500}><path d="M1 1H16V12H7L3.500 15.500V12H1Z" /></Icon>Comments</ActionButton>
          <ActionButton $w={104} $primary><Icon w={17} h={18} sw={1.500} color="#fff"><path d="M1 6V17H15V12M4 13Q4 6 11 6V9.500L16.500 5L11 1V4Q3 5 4 13Z" /></Icon>Share<Chevron w={9} color="#fff" /></ActionButton>
        </Actions>
      </TabBar>

      <Ribbon>
        <ClipboardGroup />
        <FontGroup />
        <AlignmentGroup />
        <NumberGroup />
        <StylesGroup />
        <CellsGroup />
        <EditingGroup />
        <SensitivityGroup />
        <AddinsGroup />
        <AnalyzeGroup />
        <Collapse><Icon w={15} h={9} sw={1.800}><path d="M1 8L7.500 1.300L14 8" /></Icon></Collapse>
      </Ribbon>

      <FormulaBar>
        <Field $w={152}><Text $ml={6} $size={18} $w={46}>AA15</Text><Slot $ml={76}><Chevron w={15} h={9} color={INK} /></Slot></Field>
        <Slot $ml={13} $w={4} $mt={-6}><Icon w={4} h={18}><path d="M0 0H4V4H0ZM0 7H4V11H0ZM0 14H4V18H0Z" fill={INK} stroke="none" /></Icon></Slot>
        <Field $w={129} $ml={13}>
          <Slot $ml={9}><Icon w={18} h={18} color="#b5b5b5" sw={1.700}><path d="M.5.500L17.500 17.500M17.500.500L.5 17.500" /></Icon></Slot>
          <Slot $ml={15}><Icon w={24} h={17} color="#b5b5b5" sw={1.700}><path d="M1 8L8.500 16L23 1" /></Icon></Slot>
          <Fx>fx</Fx>
          <Slot $ml={5}><Chevron w={15} h={9} sw={1.8} color="#a0a0a0" /></Slot>
        </Field>
        <Field $ml={5}><Push /><Slot $mt={-4}><Chevron w={15} h={9} color={INK} /></Slot><Slot $w={5} /></Field>
      </FormulaBar>

      <Body>
        <Sheet>
          <HeadRow>
            <Corner><svg width="40" height="40"><path d="M40 0V40H0Z" fill="#dfdfdf" /></svg></Corner>
            {COLS.map(([name, w]) => <ColHead key={name} $w={w}>{name}</ColHead>)}
          </HeadRow>
          {[1, 2, 3, 4, 5, 6, 7, 8, 9, 10, 11, 12, 13].map(r => <GridRow key={r} r={r} />)}
        </Sheet>
        <VScroll>
          <svg width="13" height="10"><path d="M6.500 0Q7.500 0 13 8V10H0V8Q5.500 0 6.500 0Z" fill="#6e6e6e" /></svg>
          <VThumb />
          <svg width="13" height="10"><path d="M6.500 10Q7.500 10 13 2V0H0V2Q5.500 10 6.500 10Z" fill="#6e6e6e" /></svg>
        </VScroll>
      </Body>

      <SheetTabs>
        <Slot $mt={-3}><Icon w={9} h={15} color="#9a9a9a" sw={1.700}><path d="M8 .8L1 7.500L8 14.200" /></Icon></Slot>
        <Slot $ml={40} $mt={-3}><Icon w={9} h={15} color="#9a9a9a" sw={1.700}><path d="M1 .8L8 7.500L1 14.200" /></Icon></Slot>
        <SheetTab $w={133} $ml={87}>CustomerData</SheetTab>
        <VRule $h={28} $ml={20} $mt={10} />
        <ActiveTab><ActiveTabText>PIVOT TABLE</ActiveTabText></ActiveTab>
        <VRule $h={28} $ml={6} $mt={10} />
        <SheetTab $w={49} $ml={19}>Table</SheetTab>
        <VRule $h={28} $ml={20} $mt={10} />
        <Slot $ml={63} $mt={-3}><Icon w={17} h={17} sw={1.600}><path d="M0 8.500H17M8.500 0V17" /></Icon></Slot>
        <Slot $ml={490} $mt={0}><Icon w={4} h={16}><path d="M0 0H4V3.500H0ZM0 6H4V9.500H0ZM0 12H4V15.500H0Z" fill={INK} stroke="none" /></Icon></Slot>
        <HScroll>
          <svg width="10" height="14"><path d="M0 7Q0 6 8 0H10V14H8Q0 8 0 7Z" fill="#6e6e6e" /></svg>
          <HThumb />
          <Push />
          <svg width="10" height="14"><path d="M10 7Q10 6 2 0H0V14H2Q10 8 10 7Z" fill="#6e6e6e" /></svg>
        </HScroll>
      </SheetTabs>

      <StatusBar>
        <Text $size={15} $w={43} $ls={-0.1}>Ready</Text>
        <Slot $ml={28}><Icon w={22} h={20} sw={1.600} color="#333"><path d="M8 17.500H1V1H21V6M1 4.500H21M4 8H9M4 11H8M4 14H8" /><circle cx="14.500" cy="13" r="6" /><circle cx="14.500" cy="13" r="2.800" fill="#333" /></Icon></Slot>
        <Slot $ml={25}><Icon w={22} h={22} sw={1.500} color="#333"><circle cx="9.500" cy="3.300" r="2.500" /><path d="M1 5Q5 9 6 9V13L4 20Q5 22 7 19L9.500 14L11 16M1 5Q2 2 6 6H13Q17 2 18.500 5Q14 8 13 9V12" /><path d="M12 13L21 21.500M21 13L12 21.500" /></Icon></Slot>
        <Text $ml={4} $size={15.3} $bold={700}>Accessibility: Investigate</Text>
        <Push />
        <ViewButton $on><Icon w={20} h={20} sw={1.800} color="#222"><path d="M1 1H19V19H1ZM7 1V19M13 1V19M1 7H19M1 13H19" /></Icon></ViewButton>
        <ViewButton><Icon w={22} h={20} sw={1.800} color="#222"><path d="M1 1H21V19H1ZM5.500 4H16.500V16H5.500ZM8 7H14M8 10H14M8 13H14" /></Icon></ViewButton>
        <ViewButton><Icon w={22} h={20} sw={1.800} color="#222"><path d="M1 1H21V19H1ZM1 12H14V1M7.500 1V12" /></Icon></ViewButton>
        <Slot $ml={8}><Icon w={188} h={18} sw={1.300} color="#333"><path d="M0 9H12M176 9H188M182 3V15" /><path d="M20 10H168" stroke="#616161" strokeWidth="2" /><path d="M94 5.500V14" strokeWidth="2" stroke="#616161" /><path d="M107 1H115V18H107Z" fill="#616161" stroke="none" /></Icon></Slot>
        <Text $ml={19} $w={50} $size={15} $ls={-0.1}>170%</Text>
      </StatusBar>

      <Taskbar>
        <StartButton><svg width="24" height="24" viewBox="0 0 24 24"><path d="M0 3.500L9.700 2V11.500H0ZM10.700 1.800L24 0V11.500H10.700ZM0 12.500H9.700V22L0 20.500ZM10.700 12.500H24V24L10.700 22.200Z" fill="#fff" /></svg></StartButton>
        <TaskSearch><Magnifier w={24} h={24} color="#111" sw={1.5} />Type here to search</TaskSearch>
        <TaskIcons />
        <Slot $ml={34}><svg width="28" height="34" viewBox="0 0 28 34"><path d="M3 5Q3 0 8 0T13 5V20Q16 22 16 26Q15 33 8 34Q1 33 0 26Q0 22 3 20Z" fill="#8fc8fa" /><path d="M6.500 7H9.500V22H6.500Z" fill="#d8387a" /><circle cx="8" cy="26" r="5" fill="#1163d8" /><path d="M6.500 14H9.500V24H6.500Z" fill="#3f63d0" /><path d="M18 3.500H27V7H18ZM22.500 9L27 18H24V30H21V18H18Z" fill="#e2550a" /></svg></Slot>
        <Text $ml={16} $mt={2} $w={60} $size={19.4} $color="#fff" $ls={-0.05}>Nea...</Text>
        <Slot $ml={30} $mt={-2}><Icon w={18} h={11} color="#fff" sw={1.600}><path d="M.6 10.400L9 1L17.400 10.400" /></Icon></Slot>
        <Slot $ml={15}><Icon w={24} h={24} color="#fff" sw={1.400}><circle cx="12" cy="12" r="6.500" /><path d="M12 0V2M12 22V24M0 12H2M22 12H24M3.500 3.500L5 5M19 19L20.500 20.500M3.500 20.500L5 19M19 5L20.500 3.500" strokeWidth="1.800" /></Icon></Slot>
        <Slot $ml={13}><Icon w={24} h={20} color="#fff" sw={1.300}><path d="M.8 7H4L9 2V18L4 13H.8ZM12 7.500Q14 10 12 12.500M15 5Q19 10 15 15M18.500 2.500Q24.500 10 18.500 17.500" /></Icon></Slot>
        <Clock><span>21:21</span><span>11/11/2024</span></Clock>
        <NoteWrap>
          <svg width="24" height="28"><path d="M0 3H24V22H14L10 27V22H0Z" fill="#fff" /><path d="M4 8.500H20M4 13H20M4 17.500H13" stroke="#333" strokeWidth="1.300" /></svg>
          <Badge>2</Badge>
        </NoteWrap>
        <VRule $h={60} $ml={19} />
      </Taskbar>
    </Window>
  );
}
